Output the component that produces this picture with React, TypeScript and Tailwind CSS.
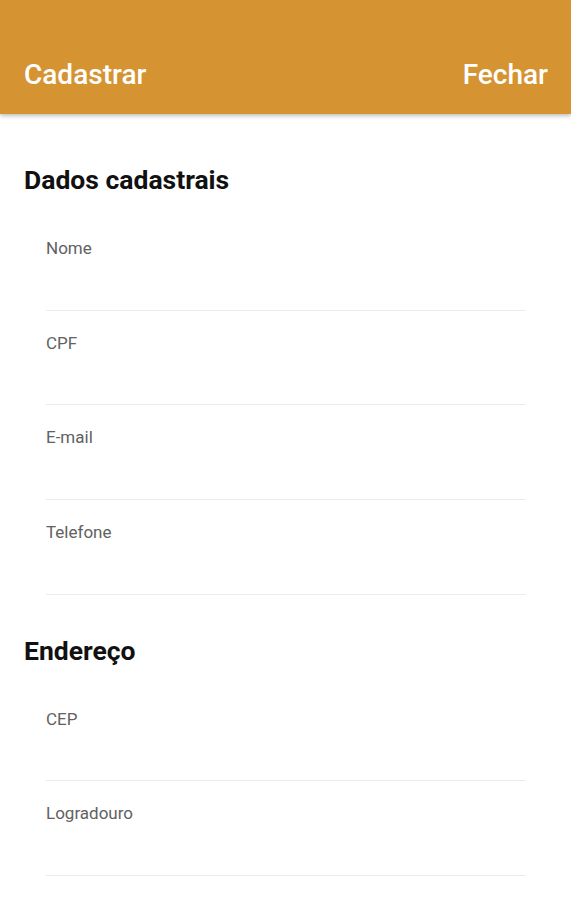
const sections = [
  { title: "Dados cadastrais", fields: ["Nome", "CPF", "E-mail", "Telefone"] },
  { title: "Endereço", fields: ["CEP", "Logradouro"] },
];

const Field = ({ label }: { label: string }) => (
  <div className="h-[94.67px] border-b border-[#ececec] pt-[21px]">
    <span className="text-[17px] leading-[20px] text-[#616161]">{label}</span>
  </div>
);

export default function App() {
  return (
    <div className="min-h-[900px] bg-white font-['Roboto',sans-serif]">
      <header className="relative z-10 h-[114px] bg-[#d69331] pt-[36px] px-6 shadow-[0_2px_4px_rgba(0,0,0,0.25)]">
        <div className="h-[78px] flex items-center justify-between text-white text-[28px] font-medium">
          <span>Cadastrar</span>
          <span className="-mr-[1px]">Fechar</span>
        </div>
      </header>
      <main className="px-6 pt-[50px]">
        {sections.map((s, i) => (
          <section key={s.title} className={i > 0 ? "mt-[40px]" : ""}>
            <h2 className="text-[26.5px] leading-[32px] font-bold text-[#111]">{s.title}</h2>
            <div className="mt-[20px] ml-[22px] mr-[21px]">
              {s.fields.map((f) => (
                <Field key={f} label={f} />
              ))}
            </div>
          </section>
        ))}
      </main>
    </div>
  );
}
